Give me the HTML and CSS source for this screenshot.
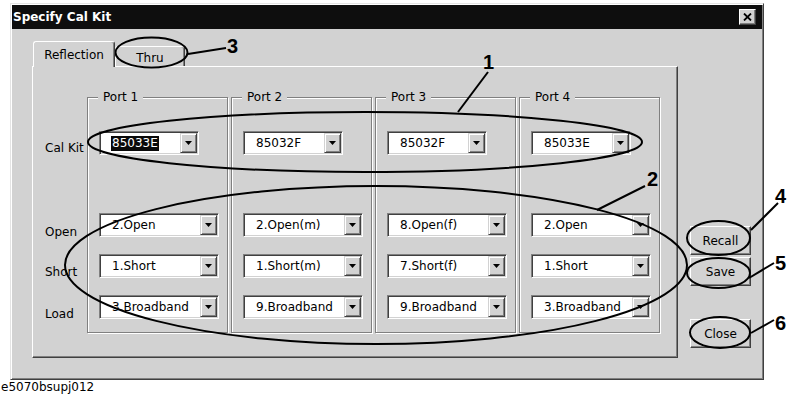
FILE: index.html
```html
<!DOCTYPE html>
<html>
<head>
<meta charset="utf-8">
<title>Specify Cal Kit</title>
<link rel="stylesheet" href="styles.css">
</head>
<body>
<div class="page">
  <div class="window">
    <div class="titlebar">
      <span class="title">Specify Cal Kit</span>
      <span class="close-btn"><svg width="9" height="8" viewBox="0 0 9 8"><path d="M1 0.5 L8 7.5 M8 0.5 L1 7.5" stroke="#000" stroke-width="1.8" fill="none"/></svg></span>
    </div>
    <div class="content">
      <div class="tabs-area">
        <div class="tabstrip">
          <div class="tab selected">Reflection</div>
          <div class="tab">Thru</div>
        </div>
        <div class="panel">
          <div class="labels">
            <div class="label l-calkit">Cal Kit</div>
            <div class="label l-open">Open</div>
            <div class="label l-short">Short</div>
            <div class="label l-load">Load</div>
          </div>

          <div class="group">
            <div class="group-title">Port 1</div>
            <div class="combo kit"><div class="field"><span class="sel">85033E</span></div><div class="drop"><i class="arrow"></i></div></div>
            <div class="combo std r-open"><div class="field">2.Open</div><div class="drop"><i class="arrow"></i></div></div>
            <div class="combo std r-next"><div class="field">1.Short</div><div class="drop"><i class="arrow"></i></div></div>
            <div class="combo std r-next"><div class="field">3.Broadband</div><div class="drop"><i class="arrow"></i></div></div>
          </div>

          <div class="group">
            <div class="group-title">Port 2</div>
            <div class="combo kit"><div class="field">85032F</div><div class="drop"><i class="arrow"></i></div></div>
            <div class="combo std r-open"><div class="field">2.Open(m)</div><div class="drop"><i class="arrow"></i></div></div>
            <div class="combo std r-next"><div class="field">1.Short(m)</div><div class="drop"><i class="arrow"></i></div></div>
            <div class="combo std r-next"><div class="field">9.Broadband</div><div class="drop"><i class="arrow"></i></div></div>
          </div>

          <div class="group">
            <div class="group-title">Port 3</div>
            <div class="combo kit"><div class="field">85032F</div><div class="drop"><i class="arrow"></i></div></div>
            <div class="combo std r-open"><div class="field">8.Open(f)</div><div class="drop"><i class="arrow"></i></div></div>
            <div class="combo std r-next"><div class="field">7.Short(f)</div><div class="drop"><i class="arrow"></i></div></div>
            <div class="combo std r-next"><div class="field">9.Broadband</div><div class="drop"><i class="arrow"></i></div></div>
          </div>

          <div class="group">
            <div class="group-title">Port 4</div>
            <div class="combo kit"><div class="field">85033E</div><div class="drop"><i class="arrow"></i></div></div>
            <div class="combo std r-open"><div class="field">2.Open</div><div class="drop"><i class="arrow"></i></div></div>
            <div class="combo std r-next"><div class="field">1.Short</div><div class="drop"><i class="arrow"></i></div></div>
            <div class="combo std r-next"><div class="field">3.Broadband</div><div class="drop"><i class="arrow"></i></div></div>
          </div>
        </div>
      </div>
      <div class="buttons">
        <div class="btn b-recall">Recall</div>
        <div class="btn b-save">Save</div>
        <div class="btn b-close">Close</div>
      </div>
    </div>
  </div>
  <div class="caption">e5070bsupj012</div>

  <svg class="annot" width="788" height="396" viewBox="0 0 788 396">
    <g fill="none" stroke="#000" stroke-width="2">
      <ellipse cx="151.5" cy="52.5" rx="36" ry="15"/>
      <ellipse cx="365" cy="142" rx="277" ry="30"/>
      <ellipse cx="376" cy="265" rx="311" ry="79"/>
      <ellipse cx="718.5" cy="238" rx="31.5" ry="17"/>
      <ellipse cx="718.5" cy="273" rx="31.5" ry="15"/>
      <ellipse cx="720" cy="332.5" rx="30" ry="15.5"/>
      <line x1="226" y1="48" x2="188" y2="54"/>
      <line x1="488" y1="72" x2="458" y2="112"/>
      <line x1="645" y1="186" x2="597" y2="210"/>
      <line x1="778" y1="203" x2="751" y2="230"/>
      <line x1="774" y1="263" x2="749" y2="278"/>
      <line x1="774" y1="320" x2="751" y2="333"/>
    </g>
    <g class="num">
      <text x="227" y="53">3</text>
      <text x="483" y="69">1</text>
      <text x="647" y="186">2</text>
      <text x="775" y="203">4</text>
      <text x="775" y="270">5</text>
      <text x="775" y="330">6</text>
    </g>
  </svg>
</div>
</body>
</html>
```
FILE: styles.css
```css
* { box-sizing: border-box; }
html, body { margin: 0; padding: 0; background: #fff; }
body {
  width: 788px;
  height: 396px;
  overflow: hidden;
  font-family: "DejaVu Sans", sans-serif;
  font-size: 12px;
  color: #000;
}
.page {
  position: relative;
  width: 788px;
  height: 396px;
  padding-top: 3px;
}
.window {
  margin-left: 10px;
  width: 754px;
  height: 377px;
  padding: 1px;
  background: #d2d2d2;
  border: 1px solid;
  border-color: #e4e4e4 #404040 #404040 #e4e4e4;
  box-shadow: inset 1px 1px 0 #fff, inset -1px -1px 0 #808080;
  display: flex;
  flex-direction: column;
}
.titlebar {
  height: 24px;
  background: #0e0e0e;
  color: #fff;
  display: flex;
  align-items: center;
  justify-content: space-between;
  padding: 0 6px 0 1px;
}
.title { font-weight: bold; font-size: 12px; }
.close-btn {
  width: 17px;
  height: 16px;
  background: #d2d2d2;
  border: 1px solid;
  border-color: #fff #404040 #404040 #fff;
  box-shadow: inset -1px -1px 0 #808080;
  display: flex;
  align-items: center;
  justify-content: center;
}
.close-btn svg { display: block; }
.content {
  display: flex;
  padding: 12px 0 0 20px;
}
.tabs-area { width: 646px; }
.tabstrip {
  height: 25px;
  display: flex;
  align-items: flex-end;
  padding-left: 1px;
}
.tab {
  background: #d2d2d2;
  border-top: 1px solid #fff;
  border-left: 1px solid #fff;
  border-right: 1px solid #404040;
  box-shadow: inset -1px 0 0 #808080;
  border-radius: 3px 3px 0 0;
  display: flex;
  align-items: center;
  justify-content: center;
  white-space: nowrap;
}
.tab.selected {
  width: 82px;
  height: 26px;
  margin-bottom: -1px;
  position: relative;
  z-index: 1;
}
.tab:not(.selected) {
  width: 70px;
  height: 20px;
  padding-top: 2px;
}
.panel {
  height: 292px;
  border: 1px solid;
  border-color: #fff #404040 #404040 #fff;
  box-shadow: inset -1px -1px 0 #808080;
  padding: 30px 0 0 12px;
  display: grid;
  grid-template-columns: 39px repeat(4, 141px);
  column-gap: 3px;
  align-items: start;
}
.labels {
  padding-top: 44px;
  white-space: nowrap;
}
.label { line-height: 15px; height: 15px; }
.l-open { margin-top: 69px; }
.l-short { margin-top: 25px; }
.l-load { margin-top: 27px; }
.group {
  height: 236px;
  border: 1px solid #808080;
  box-shadow: inset 1px 1px 0 #fff, 1px 1px 0 #fff;
  padding-left: 11px;
}
.group-title {
  margin: -8px 0 0 -1px;
  padding: 0 5px;
  width: fit-content;
  height: 15px;
  line-height: 15px;
  background: #d2d2d2;
}
.combo {
  display: flex;
  height: 24px;
  padding: 1px;
  background: #fff;
  border: 1px solid;
  border-color: #808080 #fff #fff #808080;
  box-shadow: inset 1px 1px 0 #404040, inset -1px -1px 0 #d2d2d2;
}
.combo.kit { width: 100px; margin-top: 26px; }
.combo.std { width: 120px; }
.r-open { margin-top: 58px; }
.r-next { margin-top: 17px; }
.field {
  flex: 1;
  display: flex;
  align-items: center;
  padding-left: 11px;
  white-space: nowrap;
  overflow: hidden;
}
.sel {
  background: #0a0a0a;
  color: #fff;
  line-height: 15px;
  padding: 0 1px;
  margin-left: -1px;
}
.drop {
  width: 17px;
  height: 20px;
  background: #d2d2d2;
  border: 1px solid;
  border-color: #d2d2d2 #404040 #404040 #d2d2d2;
  box-shadow: inset 1px 1px 0 #fff, inset -1px -1px 0 #808080;
  display: flex;
  align-items: center;
  justify-content: center;
}
.arrow {
  display: block;
  width: 7px;
  height: 4px;
  background: #000;
  clip-path: polygon(0 0, 100% 0, 50% 100%);
}
.buttons {
  margin-left: 12px;
  padding-top: 185px;
  display: flex;
  flex-direction: column;
}
.btn {
  width: 61px;
  height: 29px;
  background: #d2d2d2;
  border: 1px solid;
  border-color: #fff #404040 #404040 #fff;
  box-shadow: inset -1px -1px 0 #808080;
  display: flex;
  align-items: center;
  justify-content: center;
}
.b-save { margin-top: 2px; }
.b-close { margin-top: 33px; }
.caption {
  margin-left: 1px;
  line-height: 15px;
  font-size: 12px;
}
.annot {
  position: absolute;
  top: 0;
  left: 0;
  pointer-events: none;
}
.num text {
  font-family: "Liberation Sans", Arial, sans-serif;
  font-weight: bold;
  font-size: 20px;
  fill: #000;
}
```
